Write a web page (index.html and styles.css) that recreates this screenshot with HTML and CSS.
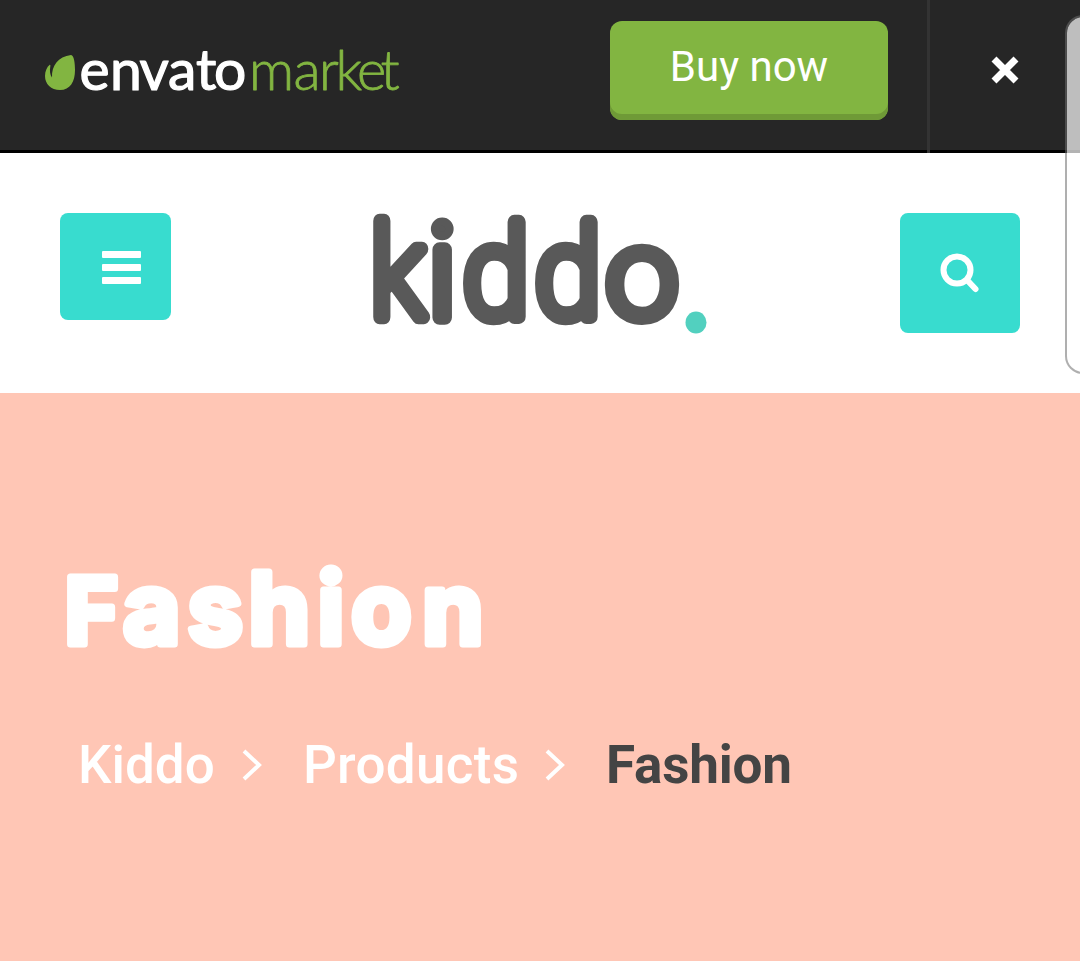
FILE: index.html
```
<!DOCTYPE html>
<html lang="en">

<head>
    <meta charset="UTF-8">
    <meta name="viewport" content="width=device-width, initial-scale=1.0">
    <title>Fashion - Kiddo</title>
    <link rel="stylesheet" href="styles.css">
</head>

<body>
    <div class="top-bar">
        <a class="envato-logo" href="#">
            <svg width="370" height="80" viewBox="36 30 370 80">
                <path class="leaf" d="M71 55C74 55.500 75 63 75 70C75 82 70 90 60 90C51 90 45 84 45 76C45 71 47 67 49.500 65C50.500 64.500 50.500 65.500 50.300 66.500C49.500 71 50 74.500 52 77.500C51.500 66 58 56.500 71 55Z" />
                <text class="envato" x="79.500 110 139.500 168 196 214" y="89.500">envato</text>
                <text class="market" x="249 293.500 319 335.500 357 380.500" y="89.500">market</text>
            </svg>
        </a>
        <button class="buy-btn" type="button">Buy now</button>
        <button class="close-btn" type="button">
            <svg width="30" height="30" viewBox="0 0 30 30">
                <path d="M4 4L26 26M26 4L4 26" />
            </svg>
        </button>
    </div>

    <div class="nav-bar">
        <button class="menu-btn" type="button">
            <span></span>
            <span></span>
            <span></span>
        </button>
        <a class="kiddo-logo" href="#">
            <svg width="340" height="124" viewBox="370 211 340 124">
                <g class="kiddo">
                    <text transform="translate(370.500 316.500) scale(0.88 1)">k</text>
                    <text transform="translate(428.500 316.500)">i</text>
                    <text transform="translate(463 316.500) scale(0.93 0.99)">d</text>
                    <text transform="translate(535 316.500) scale(0.93 0.99)">d</text>
                    <text transform="translate(606.500 316.500) scale(1 0.96)">o</text>
                </g>
                <ellipse cx="696" cy="322.500" rx="10.500" ry="11" />
            </svg>
        </a>
        <button class="search-btn" type="button">
            <svg width="42" height="42" viewBox="0 0 42 42">
                <circle cx="18" cy="18" r="13.500" />
                <path d="M28 28L36.500 37" />
            </svg>
        </button>
    </div>

    <div class="banner">
        <h1>
            <svg width="430" height="100" viewBox="60 555 430 100">
                <text x="64.500 123 187.500 248.500 317.500 351 422" y="644">F<tspan>ashion</tspan></text>
            </svg>
        </h1>
        <div class="breadcrumb">
            <a class="home" href="#">Kiddo</a>
            <svg width="20" height="32" viewBox="0 0 20 32">
                <path d="M2 2L17 16L2 30" />
            </svg>
            <a class="products" href="#">Products</a>
            <svg width="20" height="32" viewBox="0 0 20 32">
                <path d="M2 2L17 16L2 30" />
            </svg>
            <span class="current">Fashion</span>
        </div>
    </div>

    <div class="side-panel"></div>
</body>

</html>
```

FILE: styles.css
```
* {
    margin: 0;
    padding: 0;
    box-sizing: border-box;
}

body {
    position: relative;
    height: 961px;
    overflow: hidden;
    background-color: white;
    font-family: Roboto, "Liberation Sans", sans-serif;
}

button {
    border: none;
}

svg {
    display: block;
    overflow: visible;
}

.top-bar {
    display: flex;
    height: 153px;
    background-color: #262626;
    border-bottom: 3px solid black;
}

.envato-logo {
    margin-top: 30px;
    margin-left: 36px;
}

.leaf {
    fill: #82b541;
}

.envato {
    font-family: Lato, sans-serif;
    font-size: 57px;
    fill: white;
    stroke: white;
    stroke-width: 1.2;
    stroke-linejoin: round;
}

.market {
    font-family: Lato, sans-serif;
    font-size: 56px;
    font-weight: 300;
    fill: #82b541;
    stroke: #82b541;
    stroke-width: 0.8;
    stroke-linejoin: round;
}

.buy-btn {
    width: 278px;
    height: 99px;
    margin-top: 21px;
    margin-left: 204px;
    padding-bottom: 8px;
    border-radius: 12px;
    background-color: #82b541;
    box-shadow: inset 0 -6px 0 #6f9a37;
    color: white;
    font-family: Roboto, sans-serif;
    font-size: 42px;
}

.close-btn {
    display: flex;
    flex: 1;
    height: 153px;
    margin-left: 39px;
    padding-top: 55px;
    padding-left: 60px;
    background: none;
    border-left: 3px solid #333;
}

.close-btn path {
    fill: none;
    stroke: white;
    stroke-width: 7;
}

.nav-bar {
    display: flex;
    justify-content: space-between;
    height: 240px;
    padding: 60px;
    background-color: white;
}

.menu-btn,
.search-btn {
    display: flex;
    border-radius: 8px;
    background-color: #38dccf;
}

.menu-btn {
    flex-direction: column;
    gap: 6px;
    width: 111px;
    height: 107px;
    padding-top: 38px;
    padding-left: 42px;
}

.menu-btn span {
    width: 39px;
    height: 7px;
    border-radius: 1px;
    background-color: white;
}

.kiddo-logo {
    margin-top: -2px;
    margin-right: -9px;
}

.kiddo {
    font-family: Roboto, sans-serif;
    font-size: 128px;
    font-weight: 200;
    fill: #595959;
    stroke: #595959;
    stroke-width: 14.5;
    stroke-linejoin: round;
}

.kiddo-logo ellipse {
    fill: #52d0bf;
}

.search-btn {
    width: 120px;
    height: 120px;
    padding-top: 39px;
    padding-left: 39px;
}

.search-btn circle,
.search-btn path {
    fill: none;
    stroke: white;
    stroke-width: 6;
    stroke-linecap: round;
}

.banner {
    height: 568px;
    padding-top: 162px;
    padding-left: 60px;
    background-color: #ffc6b5;
}

h1 text {
    font-family: Inter, sans-serif;
    font-size: 92px;
    font-weight: 700;
    fill: white;
    stroke: white;
    stroke-width: 7;
    stroke-linejoin: round;
}

h1 tspan {
    font-size: 99px;
}

.breadcrumb {
    display: flex;
    align-items: center;
    height: 64px;
    margin-top: 78px;
    padding-left: 16px;
    font-size: 53px;
    font-weight: 500;
    color: white;
}

.breadcrumb a {
    color: white;
    text-decoration: none;
}

.breadcrumb .home {
    width: 166px;
    padding-left: 2px;
}

.breadcrumb .products {
    width: 245px;
    margin-left: 38px;
    padding-left: 3px;
    letter-spacing: 0.3px;
}

.breadcrumb .current {
    margin-left: 41px;
    color: #444;
    font-weight: 700;
    letter-spacing: -0.2px;
}

.breadcrumb path {
    fill: none;
    stroke: white;
    stroke-width: 4;
}

.side-panel {
    position: absolute;
    top: 15px;
    right: -40px;
    width: 55px;
    height: 359px;
    border: 2px solid rgba(110, 110, 110, 0.55);
    border-radius: 18px;
    background-color: rgba(255, 255, 255, 0.7);
    background-clip: padding-box;
}
```
